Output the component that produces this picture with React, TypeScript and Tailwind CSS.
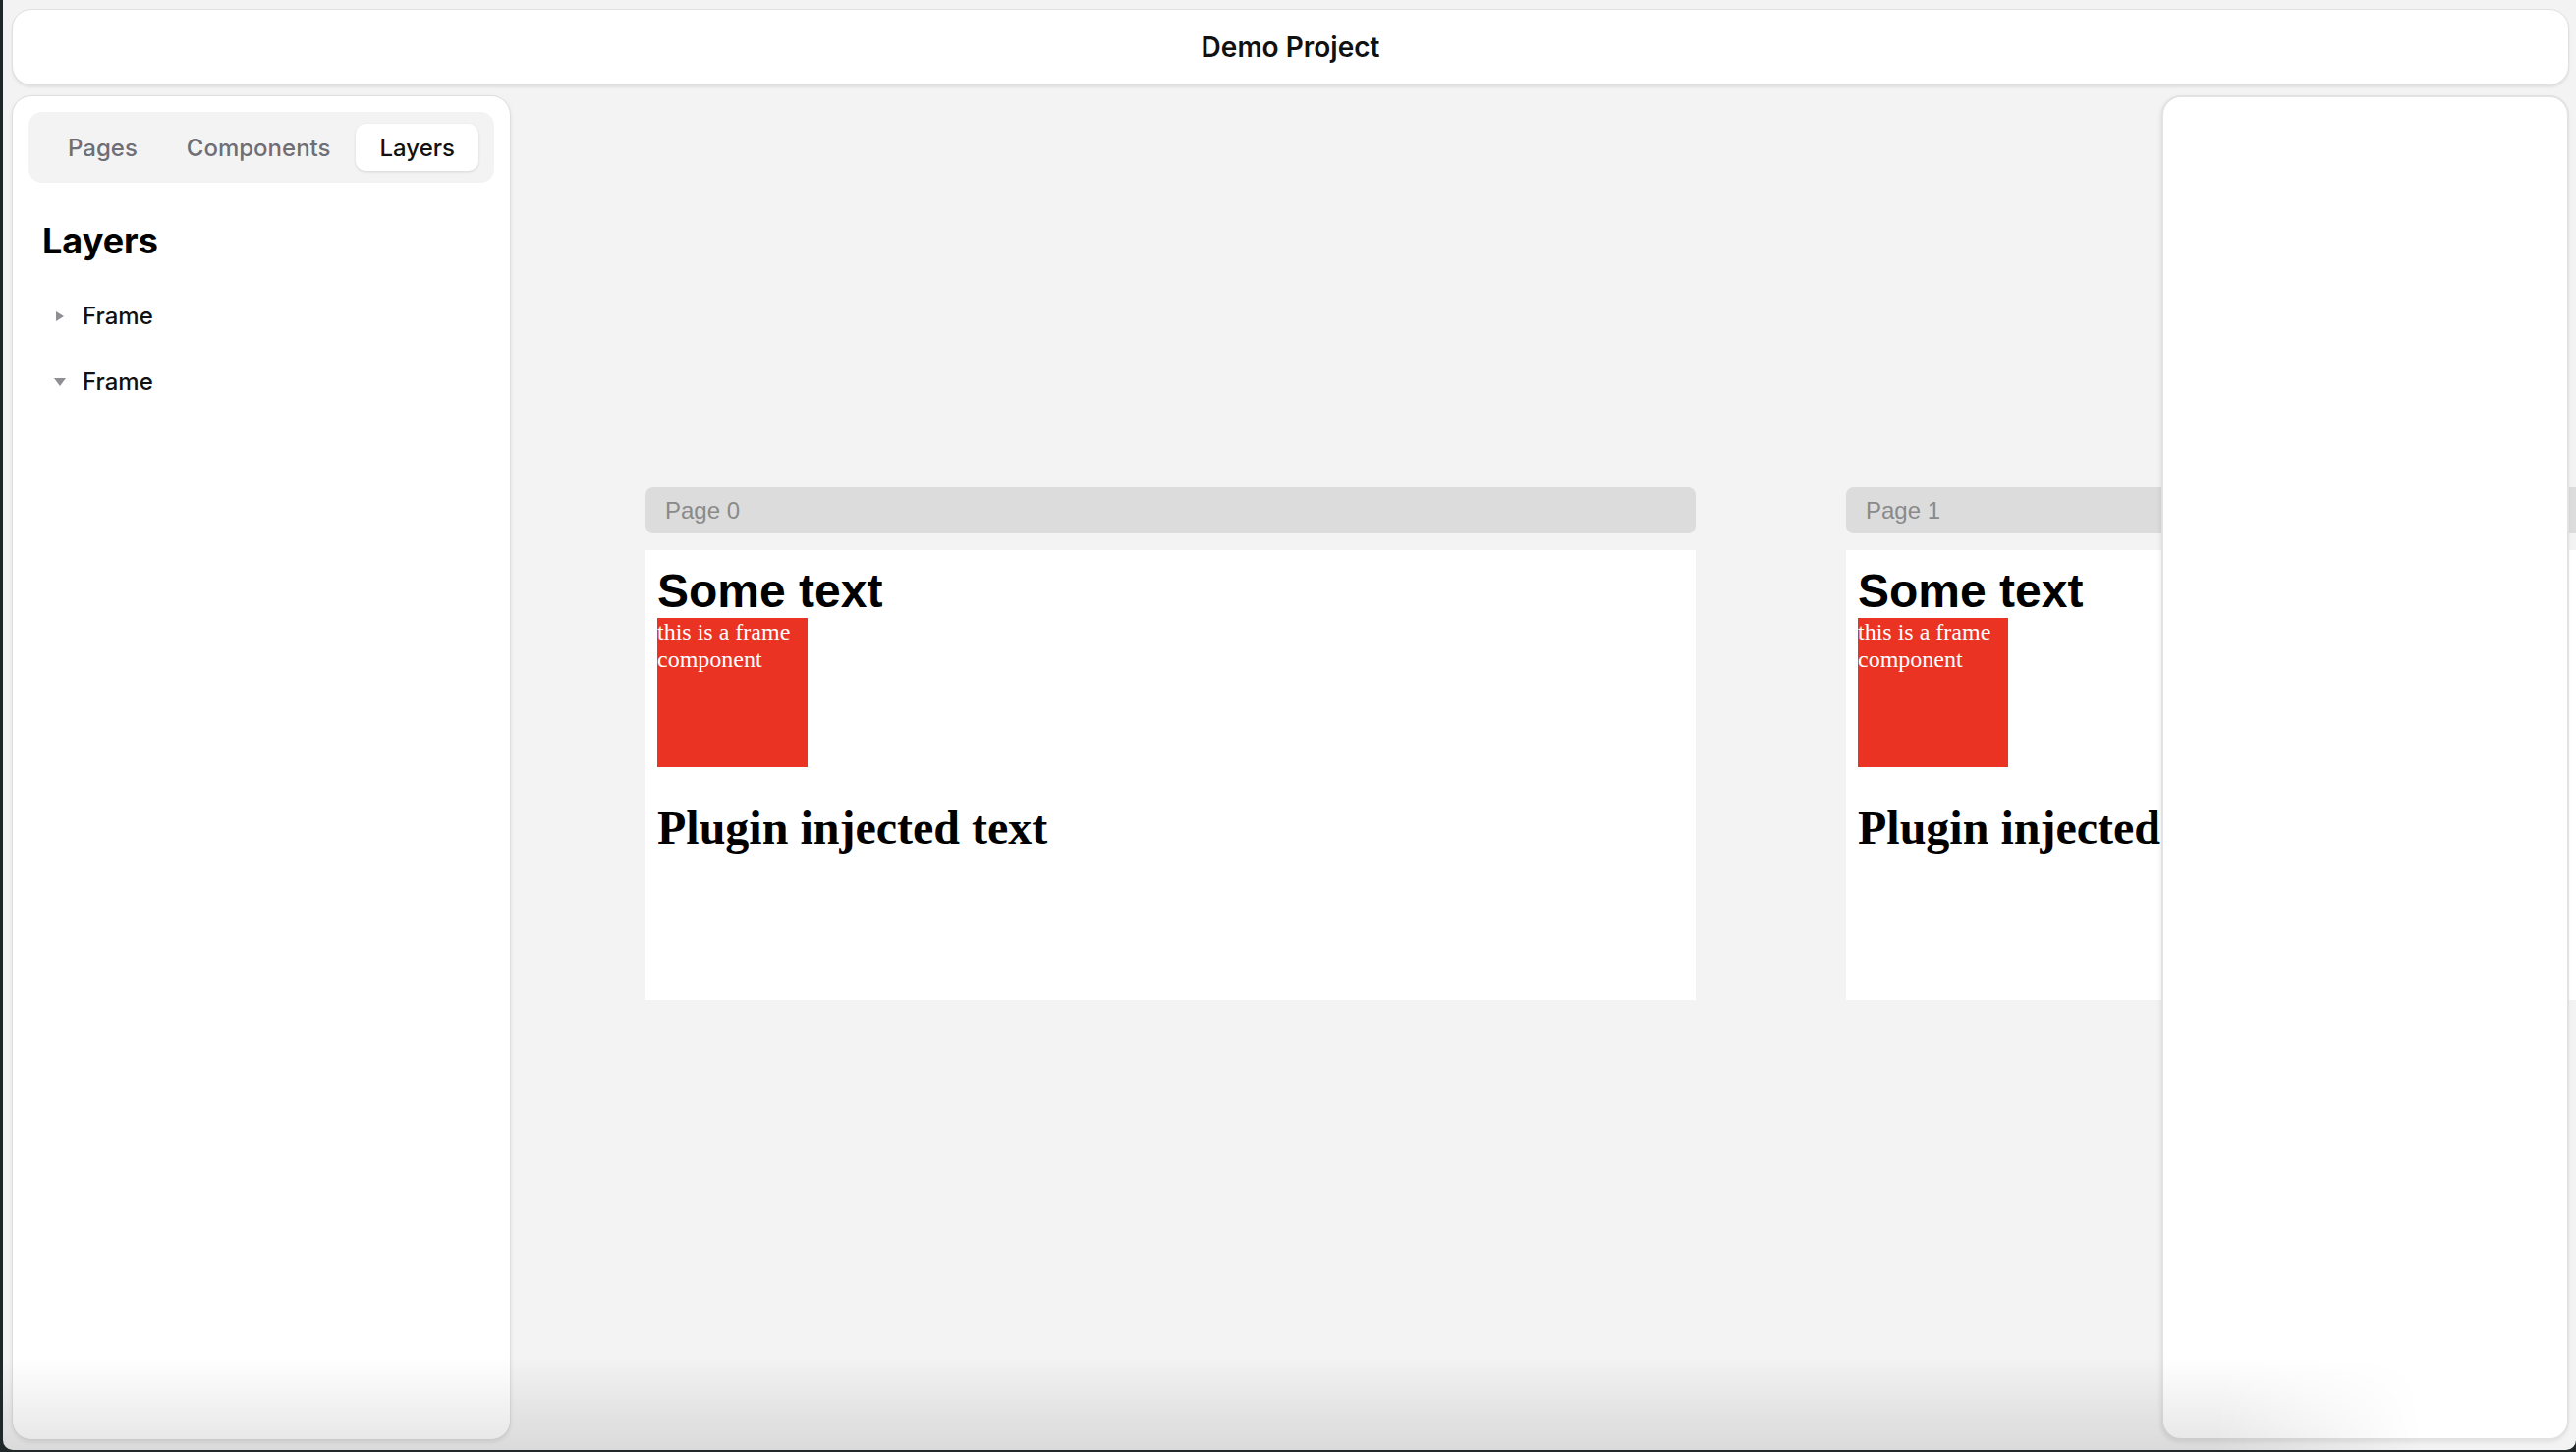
import React from 'react';

const ui = { fontFamily: 'Inter, "Noto Sans", sans-serif' };
const sans = { fontFamily: '"Liberation Sans", Arial, sans-serif' };
const serif = { fontFamily: '"Liberation Serif", "Times New Roman", serif' };

function PageFrame({ index }: { index: number }) {
  return (
    <div className="flex w-[1069px] shrink-0 flex-col gap-[17px]">
      {/* Page label */}
      <div className="flex h-[47px] items-center rounded-[8px] bg-[#dcdcdc] px-[20px]">
        <span className="text-[24px] text-[#8a8a8a]" style={sans}>
          Page {index}
        </span>
      </div>

      {/* Page body */}
      <div className="h-[458px] bg-white pl-[12px] pt-[15px]">
        <h1 className="text-[48px] font-bold leading-[1.117] text-black" style={sans}>
          Some text
        </h1>
        <div className="h-[152px] w-[153px] bg-[#ea3323]">
          <p className="text-[24px] leading-[28px] text-white" style={serif}>
            this is a frame component
          </p>
        </div>
        <h1 className="mt-[35px] text-[48px] font-bold leading-[1.107] text-black" style={serif}>
          Plugin injected text
        </h1>
      </div>
    </div>
  );
}

function LayerRow({ open }: { open: boolean }) {
  return (
    <div className="flex h-[67px] items-center pl-[22px]">
      <div className="flex w-[20px] items-center justify-center">
        {open ? (
          <svg width="12" height="8" viewBox="0 0 12 8">
            <path d="M0 0 L12 0 L6 8 Z" fill="#8e8e93" />
          </svg>
        ) : (
          <svg width="8" height="10" viewBox="0 0 8 10">
            <path d="M0 0 L8 5 L0 10 Z" fill="#8e8e93" />
          </svg>
        )}
      </div>
      <span className="ml-[13px] text-[24px] font-medium text-[#111]">Frame</span>
    </div>
  );
}

export default function App() {
  const tabs = ['Pages', 'Components', 'Layers'];
  const active = 'Layers';

  return (
    <div className="h-screen w-screen overflow-hidden bg-[#1f2729]" style={ui}>
      <div className="relative ml-[3px] h-[1476px] w-[2619px] overflow-hidden rounded-b-[10px] bg-[#f3f3f3]">
        {/* Canvas */}
        <div className="absolute inset-0 flex items-start gap-[153px] pl-[654px] pt-[496px]">
          <PageFrame index={0} />
          <PageFrame index={1} />
        </div>

        {/* Chrome */}
        <div className="relative flex h-full flex-col gap-[10px] pb-[10px] pl-[9px] pr-[7px] pt-[9px]">
          {/* Header */}
          <header className="flex h-[78px] shrink-0 items-center justify-center rounded-[20px] border border-[#e0e0e0] bg-white shadow-[0_2px_3px_rgba(0,0,0,0.08)]">
            <h1 className="text-[28px] font-semibold text-[#111]">Demo Project</h1>
          </header>

          <div className="flex min-h-0 flex-1 justify-between">
            {/* Left sidebar */}
            <aside className="flex w-[508px] flex-col rounded-[20px] border border-[#dedede] bg-white p-[16px] shadow-[0_2px_4px_rgba(0,0,0,0.08)]">
              <div className="flex h-[72px] items-center justify-center gap-[2px] rounded-[14px] bg-[#f3f3f4]">
                {tabs.map((t) => (
                  <button
                    key={t}
                    type="button"
                    className={`h-[48px] rounded-[10px] px-[24px] pt-[2px] text-[24px] font-medium ${
                      t === active
                        ? 'bg-white text-[#111] shadow-[0_1px_3px_rgba(0,0,0,0.12)]'
                        : 'text-[#6e6e76]'
                    }`}
                  >
                    {t}
                  </button>
                ))}
              </div>

              <h2 className="mt-[41px] px-[14px] text-[36px] font-bold leading-[36px] text-black">Layers</h2>

              <div className="mt-[25px] flex flex-col">
                <LayerRow open={false} />
                <LayerRow open={true} />
              </div>
            </aside>

            {/* Right panel */}
            <aside className="w-[415px] rounded-[20px] border-2 border-[#e2e2e2] bg-white shadow-[-1px_2px_4px_rgba(0,0,0,0.08)]" />
          </div>
        </div>

        {/* Bottom fade */}
        <div className="pointer-events-none absolute bottom-0 left-0 h-[95px] w-full bg-[linear-gradient(to_bottom,rgba(0,0,0,0),rgba(0,0,0,0.1))] [mask-image:linear-gradient(to_right,black_86%,transparent_94%)]" />
      </div>
    </div>
  );
}
